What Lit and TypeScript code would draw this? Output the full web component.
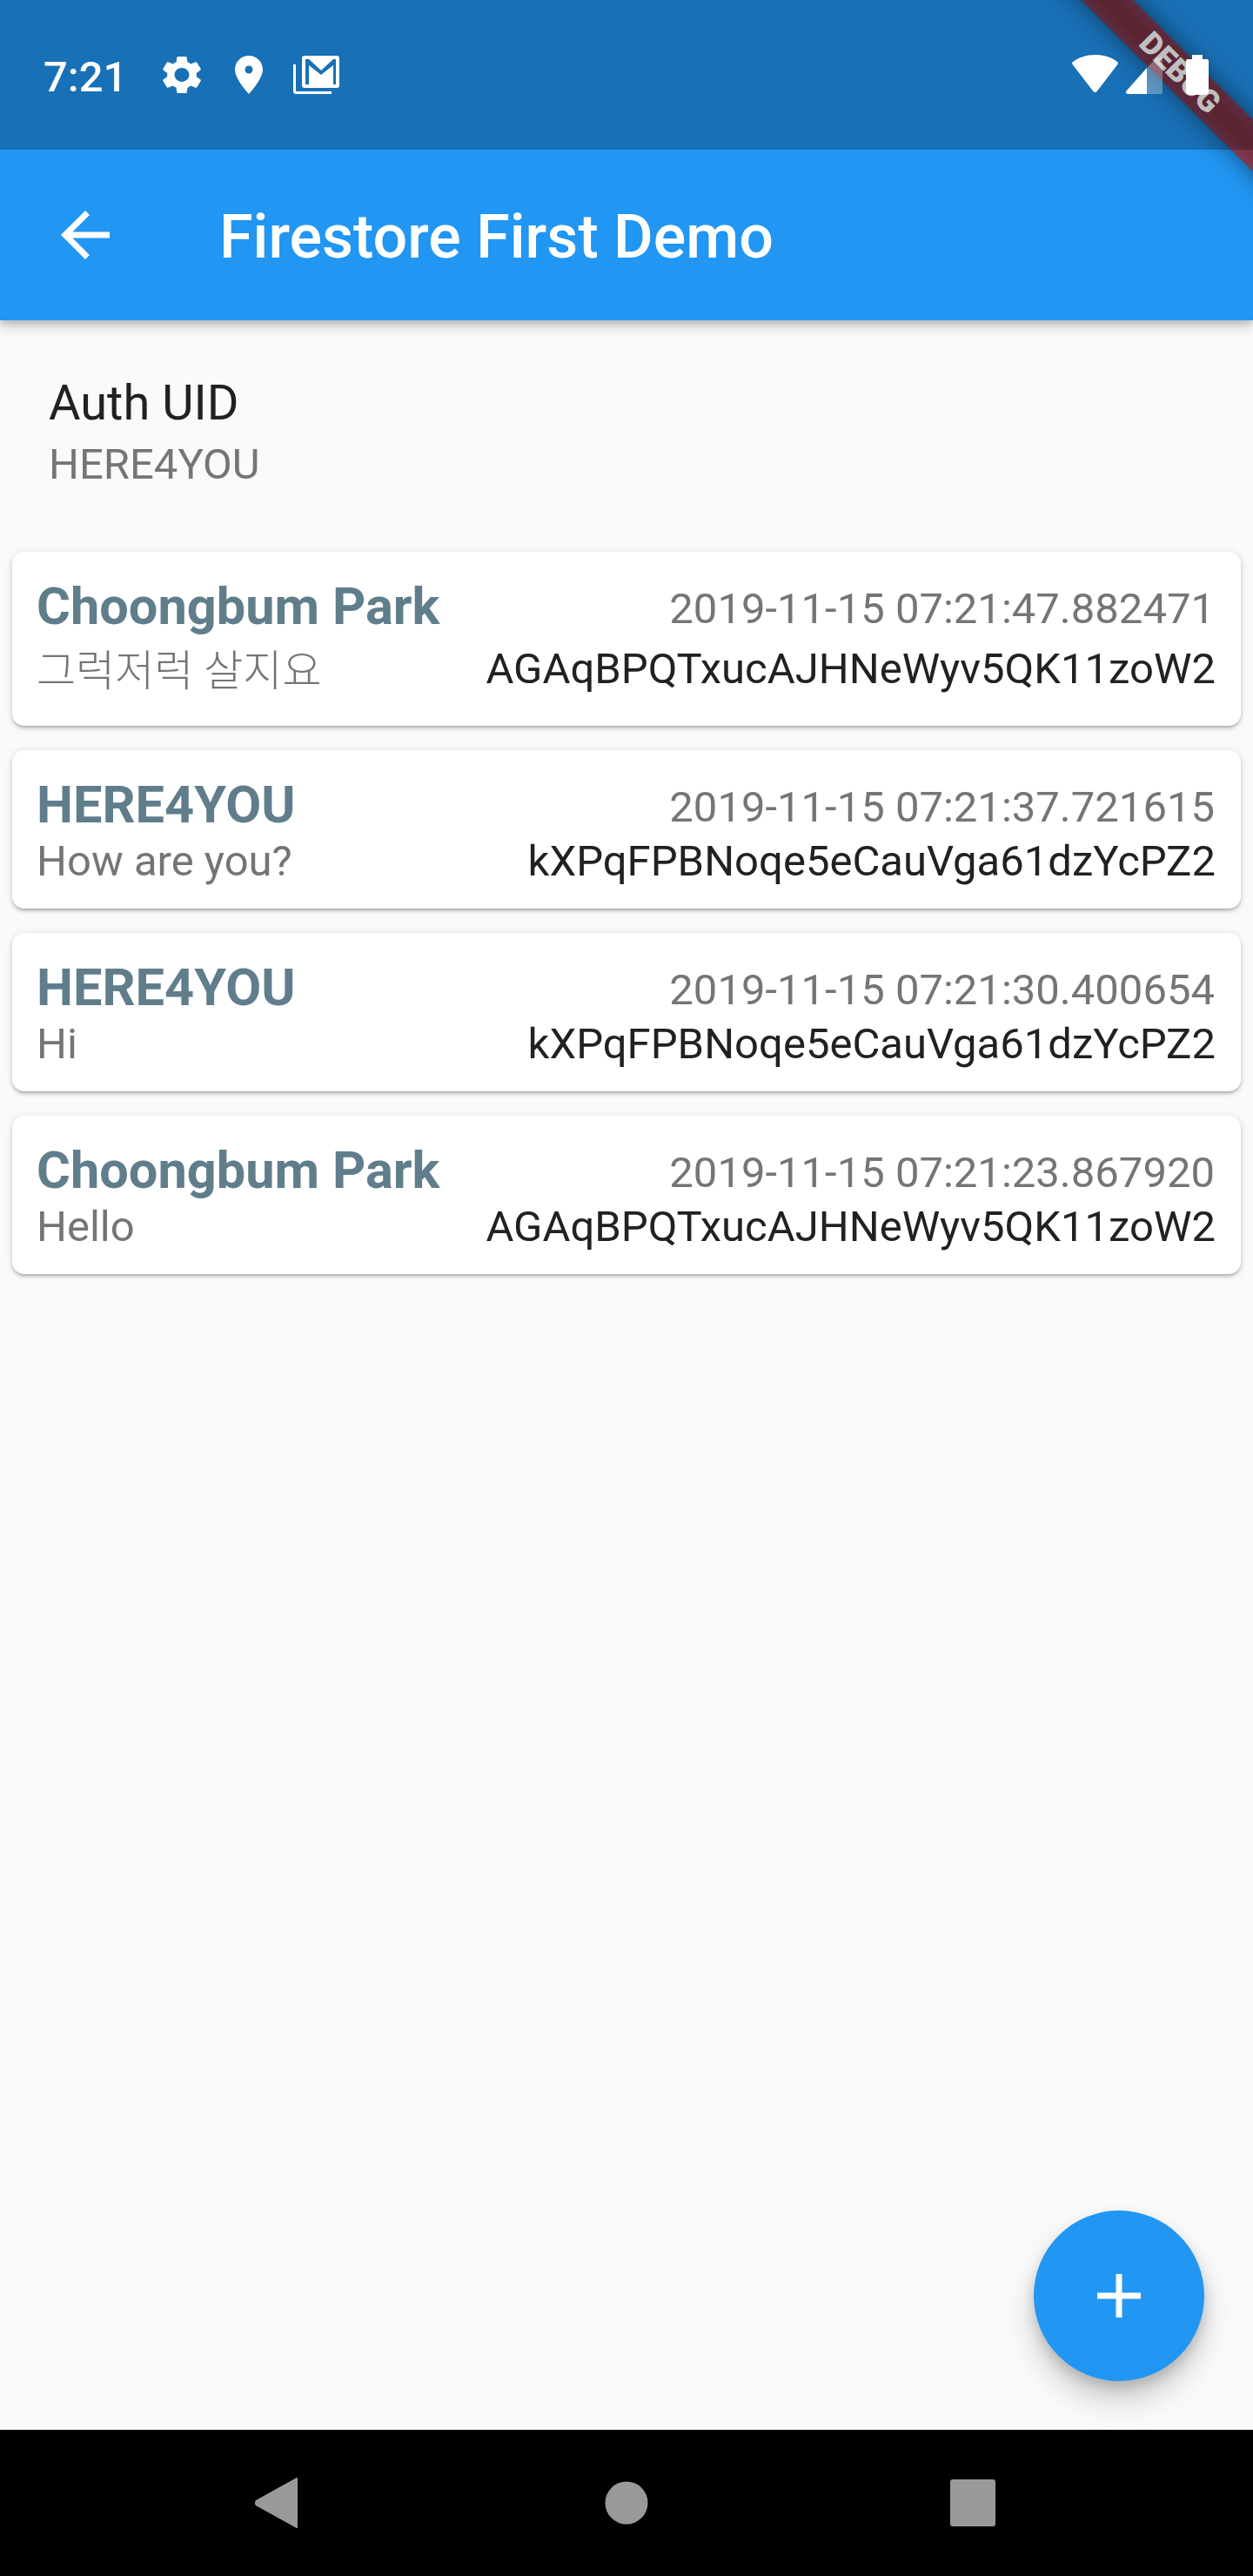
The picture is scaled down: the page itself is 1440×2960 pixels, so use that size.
import { LitElement, html, css, svg } from "lit";
import { customElement } from "lit/decorators.js";

interface Message {
  name: string;
  text: string;
  time: string;
  uid: string;
  tall?: boolean;
}

const MESSAGES: Message[] = [
  {
    name: "Choongbum Park",
    text: "그럭저럭 살지요",
    time: "2019-11-15 07:21:47.882471",
    uid: "AGAqBPQTxucAJHNeWyv5QK11zoW2",
    tall: true,
  },
  {
    name: "HERE4YOU",
    text: "How are you?",
    time: "2019-11-15 07:21:37.721615",
    uid: "kXPqFPBNoqe5eCauVga61dzYcPZ2",
  },
  {
    name: "HERE4YOU",
    text: "Hi",
    time: "2019-11-15 07:21:30.400654",
    uid: "kXPqFPBNoqe5eCauVga61dzYcPZ2",
  },
  {
    name: "Choongbum Park",
    text: "Hello",
    time: "2019-11-15 07:21:23.867920",
    uid: "AGAqBPQTxucAJHNeWyv5QK11zoW2",
  },
];

const GEAR = svg`<path d="M19.14 12.94c.04-.3.06-.61.06-.94 0-.32-.02-.64-.07-.94l2.03-1.58c.18-.14.23-.41.12-.61l-1.92-3.32c-.12-.22-.37-.29-.59-.22l-2.39.96c-.5-.38-1.03-.7-1.62-.94l-.36-2.54c-.04-.24-.24-.41-.48-.41h-3.84c-.24 0-.43.17-.47.41l-.36 2.54c-.59.24-1.13.57-1.62.94l-2.39-.96c-.22-.08-.47 0-.59.22L2.74 8.87c-.12.21-.08.47.12.61l2.03 1.58c-.05.3-.09.63-.09.94s.02.64.07.94l-2.03 1.58c-.18.14-.23.41-.12.61l1.92 3.32c.12.22.37.29.59.22l2.39-.96c.5.38 1.03.7 1.62.94l.36 2.54c.05.24.24.41.48.41h3.84c.24 0 .44-.17.47-.41l.36-2.54c.59-.24 1.13-.56 1.62-.94l2.39.96c.22.08.47 0 .59-.22l1.92-3.32c.12-.22.07-.47-.12-.61l-2.01-1.58zM12 15.6c-1.98 0-3.6-1.62-3.6-3.6s1.62-3.6 3.6-3.6 3.6 1.62 3.6 3.6-1.62 3.6-3.6 3.6z"/>`;

@customElement("app-root")
export class AppRoot extends LitElement {
  static styles = css`
    :host {
      display: block;
      width: 1440px;
      height: 2960px;
      font-family: Roboto, "Noto Sans CJK KR", sans-serif;
    }

    .page {
      position: relative;
      width: 1440px;
      height: 2960px;
      overflow: hidden;
      display: flex;
      flex-direction: column;
      background: #fafafa;
    }

    .header {
      position: relative;
      z-index: 1;
      flex: none;
      background: #2196f3;
      box-shadow: 0 7px 14px rgba(0, 0, 0, 0.2), 0 3px 7px rgba(0, 0, 0, 0.12);
    }

    .status {
      position: relative;
      z-index: 3;
      height: 172px;
      box-sizing: border-box;
      padding-left: 50px;
      display: flex;
      align-items: flex-start;
      background: rgba(0, 0, 0, 0.25);
      color: white;
    }

    .clock {
      width: 137px;
      margin-top: 60px;
      font-size: 49px;
      font-weight: 500;
      line-height: 57px;
    }

    .status svg {
      display: block;
      fill: white;
      margin-top: 64px;
    }

    .gear {
      width: 44px;
      height: 44px;
      margin-right: 39px;
    }

    .pin {
      width: 32px;
      height: 44px;
      margin-right: 35px;
    }

    .mail {
      width: 53px;
      height: 44px;
    }

    .status .wifi {
      width: 53px;
      height: 43px;
      margin: 63px 9px 0 auto;
    }

    .status .signal {
      width: 42px;
      height: 42px;
      margin-top: 66px;
      margin-right: 27px;
    }

    .status .battery {
      width: 26px;
      height: 46px;
      margin-top: 63px;
      margin-right: 51px;
    }

    .banner {
      position: absolute;
      z-index: 2;
      top: 0;
      left: 0;
      width: 400px;
      height: 42px;
      transform: translate(1156px, 62.5px) rotate(45deg);
      color: white;
      font-size: 35.7px;
      font-weight: 900;
      line-height: 42px;
      text-align: center;
    }

    .banner::before,
    .banner::after {
      content: "";
      position: absolute;
      inset: 0;
    }

    .banner::before {
      z-index: -2;
      background: rgba(0, 0, 0, 0.5);
      filter: blur(14px);
    }

    .banner::after {
      z-index: -1;
      background: rgba(183, 28, 28, 0.63);
    }

    .bar {
      height: 196px;
      display: flex;
      align-items: center;
      color: white;
    }

    .back {
      width: 84px;
      height: 84px;
      margin-left: 56px;
      margin-right: 112px;
      fill: white;
    }

    .title {
      margin-top: 4px;
      font-size: 70px;
      font-weight: 500;
      line-height: 82px;
    }

    .auth {
      height: 252px;
      box-sizing: border-box;
      padding: 62px 56px 0;
      flex: none;
    }

    .auth-title {
      font-size: 56px;
      line-height: 66px;
      margin-bottom: 9px;
      color: #212121;
    }

    .auth-sub {
      font-size: 49px;
      line-height: 57px;
      color: #757575;
    }

    .list {
      display: flex;
      flex-direction: column;
      gap: 28px;
      padding: 14px;
    }

    .card {
      box-sizing: border-box;
      padding: 28px 28px 26px;
      background: white;
      border-radius: 14px;
      box-shadow: 0 3px 3px -2px rgba(0, 0, 0, 0.2), 0 3px 4px rgba(0, 0, 0, 0.14),
        0 1px 8px rgba(0, 0, 0, 0.12);
    }

    .row {
      display: flex;
      justify-content: space-between;
      align-items: flex-start;
    }

    .second {
      margin-top: 1px;
    }

    .tall {
      padding: 7px 0 8px;
    }

    .tall .text {
      margin-top: 3px;
      font-weight: 300;
    }

    .name {
      font-size: 59.5px;
      font-weight: 700;
      line-height: 70px;
      color: #607d8b;
    }

    .time,
    .text {
      font-size: 49px;
      line-height: 57px;
      color: #757575;
    }

    .time {
      margin: 9px 2px 0 0;
    }

    .uid {
      margin-right: 1px;
      font-size: 49px;
      line-height: 57px;
      color: #212121;
    }

    .fab {
      position: absolute;
      right: 56px;
      bottom: 224px;
      width: 196px;
      height: 196px;
      border-radius: 50%;
      display: flex;
      align-items: center;
      justify-content: center;
      background: #2196f3;
      box-shadow: 0 21px 35px rgba(0, 0, 0, 0.2), 0 7px 14px rgba(0, 0, 0, 0.14);
    }

    .fab svg {
      width: 50px;
      height: 50px;
      fill: white;
    }

    .nav {
      margin-top: auto;
      flex: none;
      height: 168px;
      display: flex;
      align-items: center;
      background: black;
    }

    .nav svg {
      width: 84px;
      height: 84px;
      fill: #999;
    }

    .nav .tri {
      margin-left: 276px;
    }

    .nav .dot {
      margin-left: 318px;
    }

    .nav .square {
      margin-left: 314px;
    }
  `;

  render() {
    return html`
      <div class="page">
        <div class="header">
          <div class="status">
            <span class="clock">7:21</span>
            <svg class="gear" viewBox="2.6 2 18.8 20" preserveAspectRatio="none">${GEAR}</svg>
            <svg class="pin" viewBox="0 0 32 44">
              <path
                fill-rule="evenodd"
                d="M16 0C7 0 0 7 0 16c0 11 16 28 16 28s16-17 16-28C32 7 25 0 16 0zm0 11.500a4.500 4.500 0 1 1 0 9 4.500 4.500 0 0 1 0-9z"
              />
            </svg>
            <svg class="mail" viewBox="0 0 53 44">
              <path
                fill-rule="evenodd"
                d="M13 0h37a3 3 0 0 1 3 3v31a3 3 0 0 1-3 3H13a3 3 0 0 1-3-3V3a3 3 0 0 1 3-3zm1 4v29h4V11l14 11 14-11v22h3V4h-3L32 17 18 4z"
              />
              <path d="M0 10h3v31h41v3H3a3 3 0 0 1-3-3z" />
            </svg>
            <svg class="wifi" viewBox="0 0 53 43">
              <path
                d="M26.500 0C16 0 7.500 3 1 8c-1 .8-1.200 2-.4 3l23.800 31c1 1.300 3.200 1.300 4.200 0l23.800-31c.8-1 .6-2.200-.4-3C45.500 3 37 0 26.500 0z"
              />
            </svg>
            <svg class="signal" viewBox="0 0 42 42">
              <path d="M24 12V42H2C0 42-.6 40 .5 38.500z" />
              <path opacity="0.3" d="M24 12 36 0h4c1 0 2 1 2 2v38c0 1-1 2-2 2H24z" />
            </svg>
            <svg class="battery" viewBox="0 0 26 46">
              <path d="M7 0h12v5h5a2 2 0 0 1 2 2v35a4 4 0 0 1-4 4H4a4 4 0 0 1-4-4V7a2 2 0 0 1 2-2h5z" />
            </svg>
          </div>
          <div class="banner">DEBUG</div>
          <div class="bar">
            <svg class="back" viewBox="0 0 24 24">
              <path d="M20 11H7.830l5.590-5.590L12 4l-8 8 8 8 1.410-1.410L7.830 13H20v-2z" />
            </svg>
            <span class="title">Firestore First Demo</span>
          </div>
        </div>

        <div class="auth">
          <div class="auth-title">Auth UID</div>
          <div class="auth-sub">HERE4YOU</div>
        </div>

        <div class="list">
          ${MESSAGES.map(
            (m) => html`
              <div class="card">
                <div class="row">
                  <span class="name">${m.name}</span>
                  <span class="time">${m.time}</span>
                </div>
                <div class="row second ${m.tall ? "tall" : ""}">
                  <span class="text">${m.text}</span>
                  <span class="uid">${m.uid}</span>
                </div>
              </div>
            `
          )}
        </div>

        <div class="fab">
          <svg viewBox="0 0 50 50"><path d="M21.500 0h7v21.500H50v7H28.500V50h-7V28.500H0v-7h21.500z" /></svg>
        </div>

        <div class="nav">
          <svg class="tri" viewBox="0 0 84 84">
            <path d="M66 14v56c0 1-1 1.500-2 .5L18 45c-1.500-1.500-1.500-4 0-6l46-25.500c1-1 2-.5 2 .5z" />
          </svg>
          <svg class="dot" viewBox="0 0 84 84"><circle cx="42" cy="42" r="24.500" /></svg>
          <svg class="square" viewBox="0 0 84 84"><rect x="16" y="15" width="52" height="54" rx="3" /></svg>
        </div>
      </div>
    `;
  }
}
